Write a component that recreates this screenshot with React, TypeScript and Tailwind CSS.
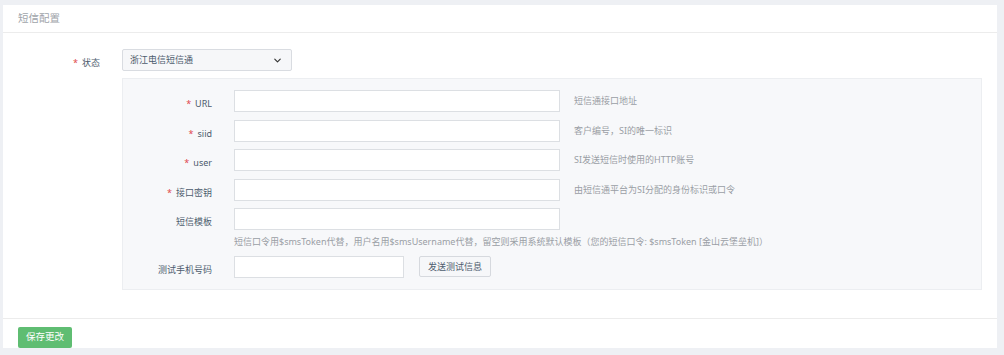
import { ChevronDown } from "lucide-react";

type Field = { label: string; required?: boolean; hint?: string };

const fields: Field[] = [
  { label: "URL", required: true, hint: "短信通接口地址" },
  { label: "siid", required: true, hint: "客户编号，SI的唯一标识" },
  { label: "user", required: true, hint: "SI发送短信时使用的HTTP账号" },
  { label: "接口密钥", required: true, hint: "由短信通平台为SI分配的身份标识或口令" },
  { label: "短信模板" },
];

function Label({ text, required }: { text: string; required?: boolean }) {
  return (
    <span className="text-[9px] text-[#4d5c6e]">
      {required && <span className="mr-1 text-[#e0474c]">*</span>}
      {text}
    </span>
  );
}

export default function App() {
  return (
    <div
      className="h-[355px] w-[1004px] bg-[#eef0f4] pl-[3px] pr-[7px] pt-[5px]"
      style={{ fontFamily: '"Noto Sans", "Noto Sans CJK SC", sans-serif' }}
    >
      <div className="flex h-[343px] flex-col bg-white">
        <div className="flex h-[28px] shrink-0 items-center border-b border-[#ececec] px-[15px] text-[10.5px] text-[#a0a4aa]">
          短信配置
        </div>

        <div className="flex shrink-0 flex-col pt-[16px]">
          <div className="flex h-[22px] items-center">
            <div className="w-[97px] text-right">
              <Label text="状态" required />
            </div>
            <div className="ml-[22px] flex h-[22px] w-[170px] items-center justify-between rounded-[2px] border border-[#d9dce1] bg-[#f6f7f9] pl-[7px] pr-[8px] text-[9px] text-[#4d5c6e]">
              <span>浙江电信短信通</span>
              <ChevronDown size={11} strokeWidth={2.5} className="text-[#333]" />
            </div>
          </div>

          <div className="ml-[119px] mr-[15px] mt-[7px] flex flex-col border border-[#eceef1] bg-[#f7f8fa] pb-[11px] pt-[11px]">
            {fields.map((f) => (
              <div key={f.label} className="mb-[7.5px] flex h-[22px] shrink-0 items-center">
                <div className="w-[89px] text-right">
                  <Label text={f.label} required={f.required} />
                </div>
                <div className="ml-[22px] h-[22px] w-[326px] border border-[#dcdfe3] bg-white" />
                {f.hint && <span className="ml-[14px] text-[9px] text-[#9a9ea5]">{f.hint}</span>}
              </div>
            ))}
            <div className="-mt-[2px] ml-[111px] h-[12px] text-[9px] leading-[12px] text-[#9a9ea5]">
              短信口令用$smsToken代替，用户名用$smsUsername代替，留空则采用系统默认模板（您的短信口令: $smsToken [金山云堡垒机]）
            </div>
            <div className="mt-[8px] flex h-[22px] shrink-0 items-center">
              <div className="w-[89px] text-right">
                <Label text="测试手机号码" />
              </div>
              <div className="ml-[22px] h-[22px] w-[170px] border border-[#dcdfe3] bg-white" />
              <button className="ml-[15px] h-[21px] w-[72px] rounded-[2px] border border-[#d6d9de] bg-[#f6f7f9] text-[9px] text-[#4d5c6e]">
                发送测试信息
              </button>
            </div>
          </div>
        </div>

        <div className="mt-[28px] flex shrink-0 border-t border-[#ececec] px-[15px] pt-[8px]">
          <button className="h-[21px] w-[54px] rounded-[2px] bg-[#5fbd72] text-[9.5px] text-white">保存更改</button>
        </div>
      </div>
    </div>
  );
}
